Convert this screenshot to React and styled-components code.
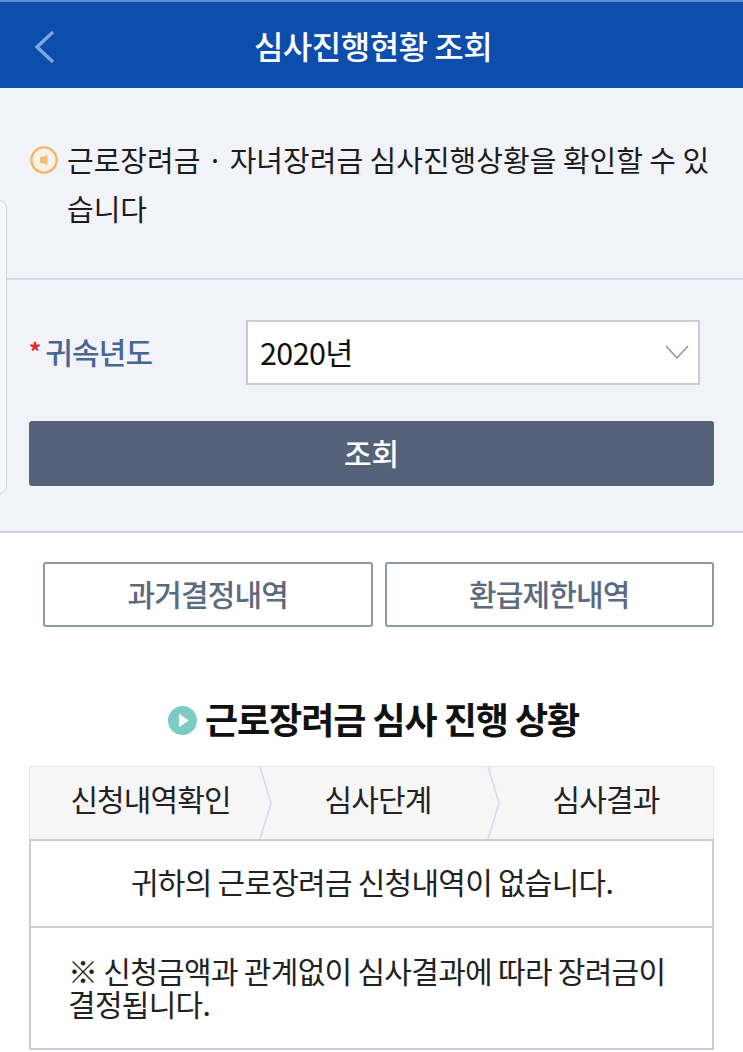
import React from 'react'
import styled, { createGlobalStyle } from 'styled-components'

const GlobalStyle = createGlobalStyle`
  html, body {
    margin: 0;
    padding: 0;
    background: #fff;
  }
  body {
    font-family: "Noto Sans CJK KR", "Noto Sans", sans-serif;
    color: #1a1a1a;
  }
  * {
    box-sizing: border-box;
  }
`

const steps = ['신청내역확인', '심사단계', '심사결과']

export default function App() {
  return (
    <Page>
      <GlobalStyle />
      <Header>
        <BackButton aria-label="뒤로">
          <svg width="24" height="36" viewBox="0 0 24 36" fill="none">
            <path d="M21 3 L5 18 L21 33" stroke="#7fa6e4" strokeWidth="3.4" />
          </svg>
        </BackButton>
        <Title>심사진행현황 조회</Title>
      </Header>

      <SearchPanel>
        <SidePeek />
        <Notice>
          <NoticeIcon>
            <svg width="28" height="28" viewBox="0 0 28 28" fill="none">
              <circle cx="14" cy="14" r="12.6" stroke="#f2b661" strokeWidth="2.4" fill="#f8f3ea" />
              <path d="M10 11 H12.5 L17.5 8.5 V19.5 L12.5 17 H10 Z" fill="#f3bd74" />
            </svg>
          </NoticeIcon>
          <NoticeText>근로장려금 · 자녀장려금 심사진행상황을 확인할 수 있습니다</NoticeText>
        </Notice>
        <Form>
          <FieldRow>
            <FieldLabel>
              <Required>*</Required>귀속년도
            </FieldLabel>
            <SelectBox>
              <span>2020년</span>
              <svg width="24" height="14" viewBox="0 0 24 14" fill="none">
                <path d="M1 1 L12 13 L23 1" stroke="#8a8f98" strokeWidth="1.4" />
              </svg>
            </SelectBox>
          </FieldRow>
          <SearchButton>조회</SearchButton>
        </Form>
      </SearchPanel>

      <LinkRow>
        <OutlineButton>과거결정내역</OutlineButton>
        <OutlineButton>환급제한내역</OutlineButton>
      </LinkRow>

      <SectionTitle>
        <svg width="29" height="29" viewBox="0 0 28 28">
          <circle cx="14" cy="14" r="14" fill="#7ccac4" />
          <path d="M10.5 7.5 L20 14 L10.5 20.5 Z" fill="#fff" />
        </svg>
        <h2>근로장려금 심사 진행 상황</h2>
      </SectionTitle>

      <StatusTable>
        <StepRow>
          {steps.map((step, i) => (
            <Step key={step}>
              {step}
              {i < steps.length - 1 && (
                <StepArrow width="14" height="72" viewBox="0 0 14 72" fill="none" preserveAspectRatio="none">
                  <path d="M1 0 L12 36 L1 72" stroke="#d6dcec" strokeWidth="1.6" />
                </StepArrow>
              )}
            </Step>
          ))}
        </StepRow>
        <TableBody>
          <EmptyRow>귀하의 근로장려금 신청내역이 없습니다.</EmptyRow>
          <NoteRow>※ 신청금액과 관계없이 심사결과에 따라 장려금이 결정됩니다.</NoteRow>
        </TableBody>
      </StatusTable>
    </Page>
  )
}

const Page = styled.div`
  width: 743px;
  height: 1052px;
  overflow: hidden;
  background: #fff;
`

const Header = styled.header`
  height: 88px;
  padding-left: 3px;
  background: #0d4dab;
  border-top: 2px solid #5f8ccc;
  display: flex;
  align-items: center;
  justify-content: center;
  position: relative;
`

const BackButton = styled.button`
  position: absolute;
  left: 32px;
  top: 27px;
  padding: 0;
  border: none;
  background: transparent;
  display: flex;
`

const Title = styled.h1`
  margin: 0;
  color: #fff;
  font-size: 32px;
  font-weight: 500;
  letter-spacing: -0.5px;
  line-height: 1;
`

const SearchPanel = styled.section`
  position: relative;
  height: 445px;
  background: #f2f3f9;
  border-bottom: 2px solid #c9d1dd;
`

const SidePeek = styled.div`
  position: absolute;
  left: -12px;
  top: 112px;
  width: 19px;
  height: 294px;
  background: #f6f7fb;
  border: 1px solid #cdd2dc;
  border-radius: 8px;
`

const Notice = styled.div`
  height: 192px;
  padding: 47px 30px 0;
  display: flex;
  align-items: flex-start;
  gap: 9px;
  border-bottom: 2px solid #d3daea;
`

const NoticeIcon = styled.span`
  display: flex;
  flex: none;
  margin-top: 11px;
`

const NoticeText = styled.p`
  position: relative;
  z-index: 1;
  margin: 0;
  font-size: 29px;
  line-height: 49px;
  letter-spacing: 0;
  color: #1c1c1c;
  word-break: break-all;
`

const Form = styled.div`
  padding: 40px 29px 0;
`

const FieldRow = styled.div`
  display: flex;
  align-items: center;
  justify-content: space-between;
  padding-right: 14px;
`

const FieldLabel = styled.label`
  padding-bottom: 4px;
  font-size: 30px;
  font-weight: 500;
  letter-spacing: -0.85px;
  color: #4a6590;
  display: flex;
  align-items: center;
`

const Required = styled.span`
  color: #e0242c;
  font-size: 24px;
  font-weight: 700;
  margin-right: 5px;
`

const SelectBox = styled.div`
  width: 454px;
  height: 65px;
  background: #fff;
  border: 2px solid #c9ccd2;
  padding: 0 9px 2px 12px;
  display: flex;
  align-items: center;
  justify-content: space-between;
  font-size: 30.5px;
  letter-spacing: -0.6px;
  color: #111;
`

const SearchButton = styled.button`
  display: block;
  width: 100%;
  height: 65px;
  margin-top: 36px;
  padding: 0 0 4px;
  border: none;
  border-radius: 3px;
  background: #556279;
  color: #fff;
  font-family: inherit;
  font-size: 30px;
  font-weight: 500;
`

const LinkRow = styled.div`
  padding: 29px 29px 0 43px;
  display: grid;
  grid-template-columns: 1fr 1fr;
  gap: 12px;
`

const OutlineButton = styled.button`
  height: 65px;
  padding: 0 0 4px;
  background: #fff;
  border: 2px solid #8f98a6;
  border-radius: 3px;
  color: #5c6a80;
  font-family: inherit;
  font-size: 30px;
  font-weight: 500;
  letter-spacing: -0.85px;
`

const SectionTitle = styled.div`
  margin-top: 64px;
  height: 54px;
  padding-left: 4px;
  display: flex;
  align-items: center;
  justify-content: center;
  gap: 8px;

  h2 {
    margin: 0;
    font-size: 36px;
    font-weight: 700;
    letter-spacing: -1.05px;
    color: #111;
  }

  svg {
    margin-top: 5px;
  }
`

const StatusTable = styled.div`
  margin: 21px 29px 0;
`

const StepRow = styled.div`
  display: grid;
  grid-template-columns: 231px 228px 1fr;
  height: 73px;
  background: #f6f6f7;
  border: 1px solid #e6e8ee;
  border-bottom: none;
`

const Step = styled.div`
  position: relative;
  display: flex;
  align-items: center;
  justify-content: center;
  padding: 0 0 10px 10px;
  font-size: 30px;
  letter-spacing: -0.9px;
  color: #222;

  &:nth-child(2) {
    padding-left: 6px;
  }
`

const StepArrow = styled.svg`
  position: absolute;
  right: -12px;
  top: 0;
  height: 100%;
`

const TableBody = styled.div`
  border: 2px solid #c9ced6;
`

const EmptyRow = styled.div`
  height: 87px;
  padding: 0 0 5px 1px;
  display: flex;
  align-items: center;
  justify-content: center;
  font-size: 30px;
  letter-spacing: -0.75px;
  color: #222;
  border-bottom: 2px solid #c9ced6;
`

const NoteRow = styled.div`
  height: 120px;
  padding: 26px 37px 0;
  font-size: 30px;
  line-height: 33px;
  letter-spacing: -0.7px;
  color: #222;
  word-break: keep-all;
`
